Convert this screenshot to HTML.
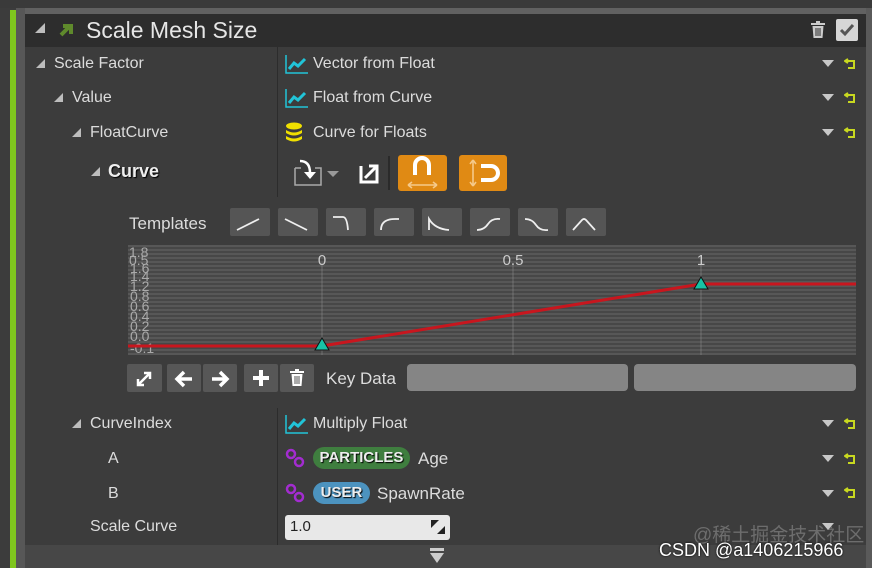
<!DOCTYPE html>
<html><head><meta charset="utf-8"><style>
*{margin:0;padding:0;box-sizing:border-box}
body{width:872px;height:568px;background:#3c3c3c;position:relative;overflow:hidden;font-family:"Liberation Sans","DejaVu Sans",sans-serif;color:#d8d8d8}
.a{position:absolute}
.t{position:absolute;font-size:16px;line-height:20px;white-space:nowrap;color:#dcdcdc}
.tri{position:absolute;width:0;height:0;border-left:9px solid transparent;border-bottom:9px solid #bdbdbd}
.dd{position:absolute;width:0;height:0;border-left:6px solid transparent;border-right:6px solid transparent;border-top:7px solid #c8c8c8}
.rs{position:absolute;width:12px;height:12px}
.tb{position:absolute;top:208px;width:40px;height:28px;background:#555;border-radius:2px}
.kb{position:absolute;top:364px;height:28px;background:#575757;border-radius:2px}
</style></head><body>
<div class="a" style="left:0;top:0;width:872px;height:8px;background:#3a3a3a"></div>
<div class="a" style="left:25px;top:8px;width:847px;height:6px;background:#616161"></div>
<div class="a" style="left:10px;top:10px;width:6px;height:558px;background:#7fc61e"></div>
<div class="a" style="left:16px;top:8px;width:9px;height:560px;background:#575757"></div>
<div class="a" style="left:866px;top:8px;width:6px;height:560px;background:#5a5a5a"></div>
<div class="a" style="left:25px;top:14px;width:841px;height:33px;background:#2d2d2d"></div>
<div class="a" style="left:25px;top:47px;width:841px;height:498px;background:#3c3c3c"></div>
<div class="a" style="left:25px;top:545px;width:841px;height:23px;background:#474747"></div>
<div class="a" style="left:277px;top:47px;width:1px;height:150px;background:#2c2c2c"></div>
<div class="a" style="left:277px;top:408px;width:1px;height:137px;background:#2c2c2c"></div>
<!-- header -->
<div class="tri" style="left:35px;top:23px;border-left-width:10px;border-bottom-width:10px"></div>
<svg class="a" style="left:58px;top:22px" width="16" height="16"><path d="M3 13L11 5M5 4h8v8" stroke="#5f8a2c" stroke-width="4" fill="none"/></svg>
<div class="t" style="left:86px;top:17px;font-size:23px;line-height:26px;color:#e6e6e6">Scale Mesh Size</div>
<svg class="a" style="left:810px;top:21px" width="16" height="18"><rect x="1" y="2" width="14" height="2" fill="#ccc"/><rect x="6" y="0" width="4" height="2" fill="#ccc"/><path d="M2.5 5h11l-1 12h-9z" fill="#ccc"/><path d="M6 7v8M8 7v8M10 7v8" stroke="#2d2d2d" stroke-width="1"/></svg>
<div class="a" style="left:836px;top:19px;width:22px;height:22px;background:#d6d6d6;border-radius:2px"></div>
<svg class="a" style="left:838px;top:21px" width="18" height="18"><path d="M3 9l4 4 8-9" stroke="#555" stroke-width="3" fill="none"/></svg>
<!-- left labels -->
<div class="tri" style="left:36px;top:59px"></div><div class="t" style="left:54px;top:54px">Scale Factor</div>
<div class="tri" style="left:54px;top:93px"></div><div class="t" style="left:72px;top:88px">Value</div>
<div class="tri" style="left:72px;top:128px"></div><div class="t" style="left:90px;top:123px">FloatCurve</div>
<div class="tri" style="left:91px;top:167px"></div><div class="t" style="left:108px;top:161px;font-size:18px;font-weight:bold;color:#eee;text-shadow:1px 1px 1px #000">Curve</div>
<div class="tri" style="left:72px;top:419px"></div><div class="t" style="left:90px;top:414px">CurveIndex</div>
<div class="t" style="left:108px;top:449px">A</div>
<div class="t" style="left:108px;top:484px">B</div>
<div class="t" style="left:90px;top:517px">Scale Curve</div>
<!-- right column -->
<svg class="a" style="left:285px;top:54px" width="24" height="20"><path d="M1 1v18h22" stroke="#21c4d8" stroke-width="1.5" fill="none"/><path d="M4 15l5-6 4 3 7-7" stroke="#21c4d8" stroke-width="3" fill="none"/></svg>
<div class="t" style="left:313px;top:54px">Vector from Float</div>
<svg class="a" style="left:285px;top:88px" width="24" height="20"><path d="M1 1v18h22" stroke="#21c4d8" stroke-width="1.5" fill="none"/><path d="M4 15l5-6 4 3 7-7" stroke="#21c4d8" stroke-width="3" fill="none"/></svg>
<div class="t" style="left:313px;top:88px">Float from Curve</div>
<svg class="a" style="left:285px;top:122px" width="18" height="22"><ellipse cx="9" cy="4" rx="8" ry="3.5" fill="#f0e000"/><path d="M1 8q8 5 16 0v3q-8 5-16 0z" fill="#f0e000"/><path d="M1 14q8 5 16 0v3q-8 5-16 0z" fill="#f0e000"/></svg>
<div class="t" style="left:313px;top:123px">Curve for Floats</div>
<svg class="a" style="left:285px;top:414px" width="24" height="20"><path d="M1 1v18h22" stroke="#21c4d8" stroke-width="1.5" fill="none"/><path d="M4 15l5-6 4 3 7-7" stroke="#21c4d8" stroke-width="3" fill="none"/></svg>
<div class="t" style="left:313px;top:414px">Multiply Float</div>
<svg class="a" style="left:285px;top:448px" width="20" height="20"><circle cx="6" cy="6" r="4" stroke="#a32cd0" stroke-width="2.5" fill="none"/><circle cx="14" cy="14" r="4" stroke="#a32cd0" stroke-width="2.5" fill="none"/></svg>
<div class="a" style="left:313px;top:447px;width:97px;height:22px;background:#3f7e3f;border-radius:11px;color:#eee;font-weight:bold;font-size:15px;line-height:22px;text-align:center;text-shadow:1px 1px 1px #000">PARTICLES</div>
<div class="t" style="left:418px;top:449px;font-size:17px">Age</div>
<svg class="a" style="left:285px;top:483px" width="20" height="20"><circle cx="6" cy="6" r="4" stroke="#a32cd0" stroke-width="2.5" fill="none"/><circle cx="14" cy="14" r="4" stroke="#a32cd0" stroke-width="2.5" fill="none"/></svg>
<div class="a" style="left:313px;top:482px;width:57px;height:22px;background:#4c93bf;border-radius:11px;color:#eee;font-weight:bold;font-size:15px;line-height:22px;text-align:center;text-shadow:1px 1px 1px #000">USER</div>
<div class="t" style="left:377px;top:484px;font-size:17px">SpawnRate</div>
<div class="a" style="left:285px;top:515px;width:165px;height:25px;background:#e8e8e8;border-radius:3px"></div>
<div class="t" style="left:290px;top:517px;color:#222;font-size:15px">1.0</div>
<svg class="a" style="left:431px;top:520px" width="14" height="14"><path d="M0 0h8L0 8zM14 14H6l8-8z" fill="#222"/></svg>
<!-- dropdowns + reset -->
<div class="dd" style="left:822px;top:60px"></div><div class="dd" style="left:822px;top:94px"></div><div class="dd" style="left:822px;top:129px"></div>
<div class="dd" style="left:822px;top:420px"></div><div class="dd" style="left:822px;top:455px"></div><div class="dd" style="left:822px;top:490px"></div><div class="dd" style="left:822px;top:523px"></div>
<svg class="rs" style="left:844px;top:58px"><path d="M2 3h8v7H4M4 1L1 3l3 2" stroke="#c8d820" stroke-width="2" fill="none"/></svg>
<svg class="rs" style="left:844px;top:92px"><path d="M2 3h8v7H4M4 1L1 3l3 2" stroke="#c8d820" stroke-width="2" fill="none"/></svg>
<svg class="rs" style="left:844px;top:127px"><path d="M2 3h8v7H4M4 1L1 3l3 2" stroke="#c8d820" stroke-width="2" fill="none"/></svg>
<svg class="rs" style="left:844px;top:418px"><path d="M2 3h8v7H4M4 1L1 3l3 2" stroke="#c8d820" stroke-width="2" fill="none"/></svg>
<svg class="rs" style="left:844px;top:453px"><path d="M2 3h8v7H4M4 1L1 3l3 2" stroke="#c8d820" stroke-width="2" fill="none"/></svg>
<svg class="rs" style="left:844px;top:487px"><path d="M2 3h8v7H4M4 1L1 3l3 2" stroke="#c8d820" stroke-width="2" fill="none"/></svg>
<!-- curve toolbar -->
<svg class="a" style="left:292px;top:158px" width="50" height="30"><path d="M3 10v17h26V10h-6M9 10H3" stroke="#aaa" stroke-width="1.5" fill="none"/><path d="M8 3q10 0 10 12" stroke="#fff" stroke-width="2.5" fill="none"/><path d="M12 14l6 7 6-7z" fill="#fff"/><path d="M35 13h12l-6 6z" fill="#999"/></svg>
<svg class="a" style="left:359px;top:164px" width="20" height="20"><path d="M2 2v16h16V10M10 2h8v8" stroke="#fff" stroke-width="3" fill="none"/><path d="M6 14l11-11" stroke="#fff" stroke-width="3"/></svg>
<div class="a" style="left:388px;top:156px;width:2px;height:34px;background:#2a2a2a"></div>
<div class="a" style="left:398px;top:155px;width:49px;height:36px;background:#e08a14;border-radius:3px"></div>
<svg class="a" style="left:398px;top:155px" width="49" height="36"><path d="M17 20V10a7 7 0 0 1 14 0v10" stroke="#fff" stroke-width="4" fill="none"/><path d="M10 30h29M10 30l4-3M10 30l4 3M39 30l-4-3M39 30l-4 3" stroke="#f5c98a" stroke-width="1.6" fill="none"/></svg>
<div class="a" style="left:459px;top:155px;width:48px;height:36px;background:#e08a14;border-radius:3px"></div>
<svg class="a" style="left:459px;top:155px" width="48" height="36"><path d="M14 5v26M14 5l-3 4M14 5l3 4M14 31l-3-4M14 31l3-4" stroke="#f5c98a" stroke-width="1.6" fill="none"/><path d="M22 11h10a7 7 0 0 1 0 14H22" stroke="#fff" stroke-width="4" fill="none"/></svg>
<!-- templates -->
<div class="t" style="left:129px;top:214px;font-size:17px">Templates</div>
<div class="tb" style="left:230px"></div><div class="tb" style="left:278px"></div><div class="tb" style="left:326px"></div><div class="tb" style="left:374px"></div><div class="tb" style="left:422px"></div><div class="tb" style="left:470px"></div><div class="tb" style="left:518px"></div><div class="tb" style="left:566px"></div>
<svg class="a" style="left:230px;top:208px" width="376" height="28" fill="none" stroke="#eee" stroke-width="1.8">
<path d="M7 22L29 11"/>
<path d="M55 11l22 11"/>
<path d="M103 9h10q4 0 5 13"/>
<path d="M151 22q0-11 14-11h4"/>
<path d="M199 22V11q6 10 20 11"/>
<path d="M247 22q7 0 11-6t12-5"/>
<path d="M295 11q7 0 11 6t12 5"/>
<path d="M343 22l9-10q2-2 4 0l9 10"/>
</svg>
<!-- graph -->
<svg class="a" style="left:128px;top:245px" width="728" height="110">
<defs><pattern id="p" width="4" height="4" patternUnits="userSpaceOnUse"><rect width="4" height="4" fill="#474747"/><rect width="4" height="2" fill="#575757"/></pattern></defs>
<rect width="728" height="110" fill="url(#p)"/>
<path d="M194 18v92M385 18v92M573 18v92" stroke="#888" stroke-width="0.6"/>
<text x="194" y="20" fill="#ccc" font-size="15" text-anchor="middle" font-family="Liberation Sans">0</text>
<text x="385" y="20" fill="#ccc" font-size="15" text-anchor="middle" font-family="Liberation Sans">0.5</text>
<text x="573" y="20" fill="#ccc" font-size="15" text-anchor="middle" font-family="Liberation Sans">1</text>
<g fill="#aaa" font-size="14" font-family="Liberation Sans"><text x="1" y="12">1.8</text><text x="1" y="20">0.5</text><text x="2" y="28">1.6</text><text x="2" y="36">1.4</text><text x="2" y="46">1.2</text><text x="2" y="56">0.8</text><text x="2" y="66">0.6</text><text x="2" y="76">0.4</text><text x="2" y="86">0.2</text><text x="2" y="96">0.0</text><text x="2" y="108">-0.1</text></g>
<path d="M0 101H194L573 39H728" stroke="#c8161e" stroke-width="3" fill="none"/>
<path d="M194 93l7 12h-14z" fill="#17c2a6" stroke="#111" stroke-width="1"/>
<path d="M573 32l7 12h-14z" fill="#17c2a6" stroke="#111" stroke-width="1"/>
</svg>
<!-- key data row -->
<div class="kb" style="left:127px;width:35px"></div>
<svg class="a" style="left:135px;top:370px" width="18" height="18"><path d="M3 15l12-12M9 3h6v6M3 9v6h6" stroke="#fff" stroke-width="2.5" fill="none"/></svg>
<div class="kb" style="left:167px;width:34px"></div><div class="kb" style="left:203px;width:34px"></div>
<svg class="a" style="left:173px;top:369px" width="22" height="20"><path d="M19 10H5M11 3l-7 7 7 7" stroke="#fff" stroke-width="3.5" fill="none"/></svg>
<svg class="a" style="left:209px;top:369px" width="22" height="20"><path d="M3 10h14M11 3l7 7-7 7" stroke="#fff" stroke-width="3.5" fill="none"/></svg>
<div class="kb" style="left:244px;width:34px"></div><div class="kb" style="left:280px;width:34px"></div>
<svg class="a" style="left:251px;top:368px" width="20" height="20"><path d="M10 2v16M2 10h16" stroke="#fff" stroke-width="4"/></svg>
<svg class="a" style="left:289px;top:369px" width="16" height="18"><rect x="1" y="2" width="14" height="2" fill="#fff"/><rect x="6" y="0" width="4" height="2" fill="#fff"/><path d="M2.5 5h11l-1 12h-9z" fill="#fff"/><path d="M6 7v8M8 7v8M10 7v8" stroke="#555" stroke-width="1"/></svg>
<div class="t" style="left:326px;top:369px;font-size:17px">Key Data</div>
<div class="a" style="left:407px;top:364px;width:221px;height:27px;background:#858585;border-radius:4px"></div>
<div class="a" style="left:634px;top:364px;width:222px;height:27px;background:#858585;border-radius:4px"></div>
<!-- bottom -->
<svg class="a" style="left:429px;top:547px" width="16" height="18"><rect x="1" y="1" width="14" height="3" fill="#ccc"/><path d="M1 6h14l-7 10z" fill="#ccc"/></svg>
<div class="t" style="left:693px;top:526px;font-size:19px;color:rgba(200,200,200,0.35);font-family:'Liberation Sans','Noto Sans CJK SC',sans-serif">@稀土掘金技术社区</div>
<div class="t" style="left:659px;top:540px;font-size:18px;color:#fff;text-shadow:0 0 2px #000">CSDN @a1406215966</div>
</body></html>
